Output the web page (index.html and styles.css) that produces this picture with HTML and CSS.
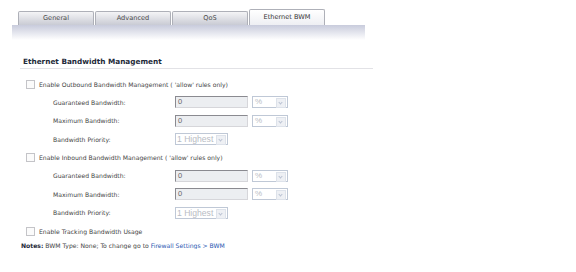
FILE: index.html
```html
<!DOCTYPE html>
<html lang="en">
<head>
  <meta charset="UTF-8">
  <title>Ethernet BWM</title>
  <link rel="stylesheet" href="styles.css">
</head>
<body>
  <div class="tabs">
    <div class="tab">General</div>
    <div class="tab">Advanced</div>
    <div class="tab">QoS</div>
    <div class="tab active">Ethernet BWM</div>
  </div>
  <div class="band"></div>

  <div class="section">
    <h2>Ethernet Bandwidth Management</h2>

    <label class="check"><span class="box"></span>Enable Outbound Bandwidth Management ( 'allow' rules only)</label>
    <div class="fields">
      <span class="name">Guaranteed Bandwidth:</span>
      <span class="field"><span class="input">0</span><span class="select unit">%<i class="arrow"></i></span></span>
      <span class="name">Maximum Bandwidth:</span>
      <span class="field"><span class="input">0</span><span class="select unit">%<i class="arrow"></i></span></span>
      <span class="name">Bandwidth Priority:</span>
      <span class="field"><span class="select prio">1 Highest<i class="arrow"></i></span></span>
    </div>

    <label class="check"><span class="box"></span>Enable Inbound Bandwidth Management ( 'allow' rules only)</label>
    <div class="fields">
      <span class="name">Guaranteed Bandwidth:</span>
      <span class="field"><span class="input">0</span><span class="select unit">%<i class="arrow"></i></span></span>
      <span class="name">Maximum Bandwidth:</span>
      <span class="field"><span class="input">0</span><span class="select unit">%<i class="arrow"></i></span></span>
      <span class="name">Bandwidth Priority:</span>
      <span class="field"><span class="select prio">1 Highest<i class="arrow"></i></span></span>
    </div>

    <label class="check"><span class="box"></span>Enable Tracking Bandwidth Usage</label>

    <p class="note"><b>Notes:</b> BWM Type: None; To change go to <a href="#">Firewall Settings &gt; BWM</a></p>
  </div>
</body>
</html>
```

FILE: styles.css
```css
/* Base */
body {
  margin: 0;
  background-color: #ffffff;
  font-family: 'DejaVu Sans', sans-serif;
  font-size: 6.1px;
  color: #444444;
}

/* Tabs */
.tabs {
  display: flex;
  align-items: flex-end;
  gap: 1px;
  height: 25px;
  padding-left: 18px;
}

.tab {
  box-sizing: border-box;
  width: 76px;
  height: 14px;
  line-height: 13px;
  text-align: center;
  color: #4a4a4a;
  font-size: 6.6px;
  border: 1px solid #aeb0b8;
  border-bottom: none;
  border-radius: 2px 2px 0 0;
  background: linear-gradient(#f4f4f6, #c9cbd4);
}

.tab.active {
  height: 16px;
  line-height: 15px;
  background: linear-gradient(#ffffff, #eeeff3);
  color: #333333;
}

.band {
  width: 353px;
  height: 15px;
  margin-left: 12px;
  background: linear-gradient(#c8cbdc, #ffffff);
}

/* Section */
.section {
  padding-left: 20px;
  width: 353px;
}

.section h2 {
  margin: 17px 0 0;
  padding: 0 0 2px 3px;
  font-size: 7.3px;
  font-weight: bold;
  color: #1e2a3a;
  border-bottom: 1px solid #e2e2e6;
}

.check {
  display: flex;
  align-items: center;
  height: 18px;
  margin-left: 6px;
  margin-top: 6px;
}

.fields + .check {
  margin-top: 0;
}

.box {
  box-sizing: border-box;
  width: 9px;
  height: 9px;
  margin-right: 4px;
  border: 1px solid #c4c4c8;
  background-color: #fbfbfb;
}

.fields {
  display: grid;
  grid-template-columns: 122px auto;
  grid-auto-rows: 18.5px;
  align-items: center;
  padding-left: 33px;
}

.field {
  display: flex;
  gap: 4px;
}

.input {
  box-sizing: border-box;
  width: 73px;
  height: 12px;
  padding-left: 2px;
  line-height: 10px;
  font-family: 'Liberation Sans', sans-serif;
  font-size: 7.5px;
  color: #666666;
  background-color: #eceef1;
  border: 1px solid #d6d6da;
  border-top-color: #8a8a90;
  border-left-color: #8a8a90;
}

.select {
  box-sizing: border-box;
  position: relative;
  height: 12px;
  padding-left: 2px;
  line-height: 10px;
  font-family: 'Liberation Sans', sans-serif;
  color: #b8bcc4;
  border: 1px solid #bfc8d6;
  background-color: #ffffff;
}

.select.unit {
  width: 36px;
  font-size: 8px;
}

.select.prio {
  width: 53px;
  padding-left: 1px;
  font-size: 8.6px;
}

.arrow {
  position: absolute;
  top: 1px;
  right: 1px;
  width: 8px;
  height: 8px;
  background-color: #eef0f4;
  border: 1px solid #dde2ea;
}

.arrow::after {
  content: "";
  position: absolute;
  left: 2px;
  top: 2px;
  width: 2px;
  height: 2px;
  border-right: 1px solid #b9c2d2;
  border-bottom: 1px solid #b9c2d2;
  transform: rotate(45deg);
}

.note {
  margin: 2px 0 0 1px;
}

.note b {
  color: #1e2a3a;
}

.note a {
  color: #2857b0;
  text-decoration: none;
}
```
